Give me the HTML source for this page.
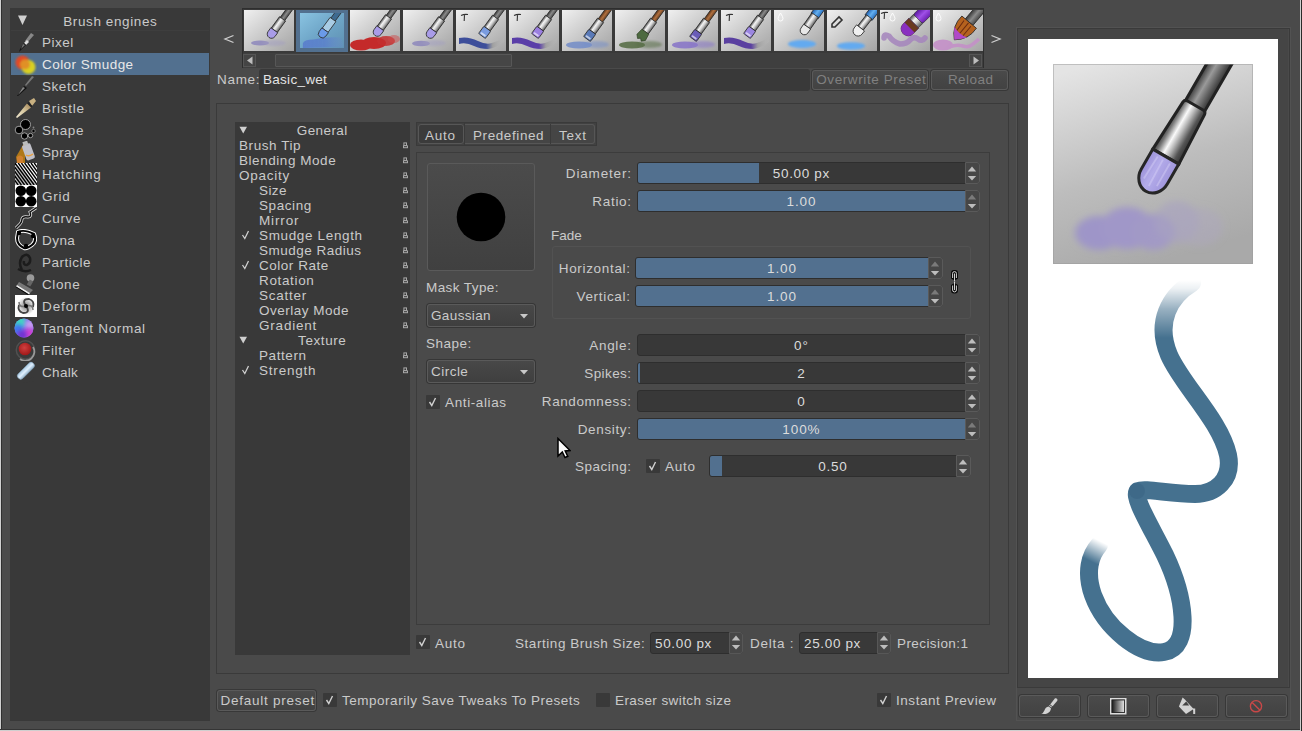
<!DOCTYPE html><html><head><meta charset="utf-8"><style>
html,body{margin:0;padding:0;}
body{width:1302px;height:731px;overflow:hidden;background:#4a4a4a;position:relative;font-family:'Liberation Sans', sans-serif;}
.t{position:absolute;white-space:nowrap;font-family:'Liberation Sans', sans-serif;font-size:13.5px;line-height:16px;color:#cacaca;}
svg{display:block;}
</style></head><body>
<div style="position:absolute;left:0px;top:0px;width:1px;height:731px;background:#cfcfcf"></div>
<div style="position:absolute;left:1px;top:0px;width:1px;height:731px;background:#2f2f2f"></div>
<div style="position:absolute;left:0px;top:730px;width:1302px;height:1px;background:#cfcfcf"></div>
<div style="position:absolute;left:0px;top:729px;width:1302px;height:1px;background:#353535"></div>
<div style="position:absolute;left:1300px;top:0px;width:1px;height:731px;background:#cfcfcf"></div>
<div style="position:absolute;left:1301px;top:0px;width:1px;height:731px;background:#2a2a2a"></div>
<div style="position:absolute;left:10px;top:8px;width:200px;height:713px;background:#393939"></div>
<div style="position:absolute;left:11px;top:30px;width:198px;height:1px;background:#3e3e3e"></div>
<svg style="position:absolute;left:17px;top:15px;" width="11" height="11" viewBox="0 0 11 11"><path d="M1 0.5 L10 0.5 L5.5 10 Z" fill="#cfcfcf"/></svg>
<div class="t" style="left:35.304px;top:14px;width:150px;text-align:center;color:#cacaca;font-size:13.5px;letter-spacing:0.608px;">Brush engines</div>
<div style="position:absolute;left:11px;top:53px;width:198px;height:22px;background:#52708f"></div>
<div class="t" style="left:42px;top:35px;color:#cacaca;font-size:13.5px;letter-spacing:0.475px;">Pixel</div>
<div class="t" style="left:42px;top:57px;color:#e8e8e8;font-size:13.5px;letter-spacing:0.436px;">Color Smudge</div>
<div class="t" style="left:42px;top:79px;color:#cacaca;font-size:13.5px;letter-spacing:0.56px;">Sketch</div>
<div class="t" style="left:42px;top:101px;color:#cacaca;font-size:13.5px;letter-spacing:0.733px;">Bristle</div>
<div class="t" style="left:42px;top:123px;color:#cacaca;font-size:13.5px;letter-spacing:0.6px;">Shape</div>
<div class="t" style="left:42px;top:145px;color:#cacaca;font-size:13.5px;letter-spacing:0.34px;">Spray</div>
<div class="t" style="left:42px;top:167px;color:#cacaca;font-size:13.5px;letter-spacing:0.796px;">Hatching</div>
<div class="t" style="left:42px;top:189px;color:#cacaca;font-size:13.5px;letter-spacing:0.757px;">Grid</div>
<div class="t" style="left:42px;top:211px;color:#cacaca;font-size:13.5px;letter-spacing:0.595px;">Curve</div>
<div class="t" style="left:42px;top:233px;color:#cacaca;font-size:13.5px;letter-spacing:0.44px;">Dyna</div>
<div class="t" style="left:42px;top:255px;color:#cacaca;font-size:13.5px;letter-spacing:0.496px;">Particle</div>
<div class="t" style="left:42px;top:277px;color:#cacaca;font-size:13.5px;letter-spacing:0.592px;">Clone</div>
<div class="t" style="left:42px;top:299px;color:#cacaca;font-size:13.5px;letter-spacing:0.894px;">Deform</div>
<div class="t" style="left:41px;top:321px;color:#cacaca;font-size:13.5px;letter-spacing:0.677px;">Tangent Normal</div>
<div class="t" style="left:42px;top:343px;color:#cacaca;font-size:13.5px;letter-spacing:0.664px;">Filter</div>
<div class="t" style="left:42px;top:365px;color:#cacaca;font-size:13.5px;letter-spacing:0.34px;">Chalk</div>
<svg width="0" height="0" style="position:absolute"><defs>
<radialGradient id="csm" cx="0.35" cy="0.35" r="0.8"><stop offset="0" stop-color="#e07a20"/><stop offset="0.6" stop-color="#d85a20"/><stop offset="1" stop-color="#cc3322"/></radialGradient>
<radialGradient id="csm2" cx="0.5" cy="0.5" r="0.6"><stop offset="0" stop-color="#d8d020"/><stop offset="1" stop-color="#c8c010"/></radialGradient>
<linearGradient id="bri" x1="0" y1="1" x2="1" y2="0"><stop offset="0" stop-color="#f0e8d0"/><stop offset="0.5" stop-color="#d8c8a0"/><stop offset="1" stop-color="#a08050"/></linearGradient>
<radialGradient id="tan" cx="0.4" cy="0.4" r="0.7"><stop offset="0" stop-color="#a0a0f0"/><stop offset="0.5" stop-color="#8060e0"/><stop offset="1" stop-color="#c040c0"/></radialGradient>
<linearGradient id="tan2" x1="0" y1="0" x2="1" y2="1"><stop offset="0" stop-color="#40e0b0" stop-opacity="0.9"/><stop offset="0.35" stop-color="#4080f0" stop-opacity="0.6"/><stop offset="0.7" stop-color="#8050e0" stop-opacity="0"/><stop offset="1" stop-color="#e040c0" stop-opacity="0.8"/></linearGradient>
<radialGradient id="fil" cx="0.45" cy="0.4" r="0.6"><stop offset="0" stop-color="#d04040"/><stop offset="1" stop-color="#a01818"/></radialGradient>
<linearGradient id="chk" x1="0" y1="0" x2="1" y2="0"><stop offset="0" stop-color="#a8c8e0"/><stop offset="0.5" stop-color="#e0f0ff"/><stop offset="1" stop-color="#90b0c8"/></linearGradient>
<radialGradient id="dfm" cx="0.5" cy="0.5" r="0.5"><stop offset="0" stop-color="#000"/><stop offset="0.4" stop-color="#666"/><stop offset="1" stop-color="#fff"/></radialGradient>
<filter id="gblur"><feGaussianBlur stdDeviation="0.4"/></filter><filter id="tb" x="-50%" y="-50%" width="200%" height="200%"><feGaussianBlur stdDeviation="2"/></filter><filter id="tb2" x="-20%" y="-20%" width="140%" height="140%"><feGaussianBlur stdDeviation="0.8"/></filter></defs></svg><svg style="position:absolute;left:14px;top:31px" width="23" height="22" viewBox="0 0 23 22"><path d="M17 2 L20 4 L13 12 L11 10 Z" fill="#888"/><path d="M13 9 L15 11 L12 14 L10 12Z" fill="#ddd"/><path d="M10 12 L12 14 L7 19 L5 21 L6 18 Z" fill="#151515"/><path d="M9 13 L11 14 L7 18Z" fill="#777"/></svg><svg style="position:absolute;left:14px;top:54px" width="23" height="22" viewBox="0 0 23 22"><g filter="url(#tb2)"><circle cx="8.5" cy="8.5" r="7" fill="#e04a28"/><circle cx="14.5" cy="13" r="7" fill="#d8d020"/><circle cx="11" cy="10.5" r="5" fill="#e09028"/></g></svg><svg style="position:absolute;left:14px;top:75px" width="23" height="22" viewBox="0 0 23 22"><path d="M19 0 L22 2 L13 13 L10 11 Z" fill="#3a3a3a"/><path d="M18 1 L20 2 L12 11 L11 10 Z" fill="#777"/><path d="M10 11 L13 13 L4 21 L3 21 Z" fill="#111"/><path d="M9 12 L11 13 L4 20 Z" fill="#888"/></svg><svg style="position:absolute;left:14px;top:97px" width="23" height="22" viewBox="0 0 23 22"><path d="M15 4 L20 1 L22 4 L18 9 Z" fill="#c8b080"/><path d="M14.5 5 L18.5 9 L17 10.5 L13 6.5 Z" fill="#222"/><path d="M13 6.5 L17 10.5 L3 21 L2 20 Z" fill="url(#bri)"/></svg><svg style="position:absolute;left:14px;top:119px" width="23" height="22" viewBox="0 0 23 22"><circle cx="11.5" cy="5.5" r="5" fill="#000" stroke="#bbb" stroke-width="0.8"/><circle cx="5" cy="11" r="3.8" fill="#000" stroke="#bbb" stroke-width="0.8"/><circle cx="10.5" cy="17" r="3.2" fill="#000" stroke="#bbb" stroke-width="0.8"/><circle cx="16.5" cy="16.5" r="2.2" fill="#000" stroke="#bbb" stroke-width="0.8"/><circle cx="19.5" cy="12" r="1.7" fill="#000" stroke="#aaa" stroke-width="0.6"/><circle cx="19.5" cy="8.5" r="0.9" fill="#888"/></svg><svg style="position:absolute;left:14px;top:141px" width="23" height="22" viewBox="0 0 23 22"><path d="M10 2 L2 16 L3 22 L11 22 L11 8 Z" fill="#b07818"/><path d="M3 16 Q6 13 9 16 L9 22 L3 22 Z" fill="#d08030"/><rect x="10" y="3" width="9" height="16" rx="2" transform="rotate(-20 14 11)" fill="#c0c0c8"/><rect x="12" y="0" width="5" height="4" transform="rotate(-20 14 11)" fill="#bbb"/><path d="M12 14 Q15 16 19 13" stroke="#e8a040" stroke-width="1.5" fill="none"/></svg><svg style="position:absolute;left:14px;top:163px" width="23" height="22" viewBox="0 0 23 22"><clipPath id="hc"><rect x="1" y="0" width="22" height="22"/></clipPath><g clip-path="url(#hc)"><rect x="1" y="0" width="22" height="22" fill="#fff"/><path d="M-11.8 0 L4.199999999999999 22" stroke="#000" stroke-width="1.4"/><path d="M-8.600000000000001 0 L7.399999999999999 22" stroke="#000" stroke-width="1.4"/><path d="M-5.4 0 L10.6 22" stroke="#000" stroke-width="1.4"/><path d="M-2.2 0 L13.8 22" stroke="#000" stroke-width="1.4"/><path d="M1.0 0 L17.0 22" stroke="#000" stroke-width="1.4"/><path d="M4.2 0 L20.2 22" stroke="#000" stroke-width="1.4"/><path d="M7.4 0 L23.4 22" stroke="#000" stroke-width="1.4"/><path d="M10.600000000000001 0 L26.6 22" stroke="#000" stroke-width="1.4"/><path d="M13.8 0 L29.8 22" stroke="#000" stroke-width="1.4"/><path d="M17.0 0 L33.0 22" stroke="#000" stroke-width="1.4"/><path d="M20.200000000000003 0 L36.2 22" stroke="#000" stroke-width="1.4"/><path d="M23.400000000000002 0 L39.400000000000006 22" stroke="#000" stroke-width="1.4"/><path d="M26.6 0 L42.6 22" stroke="#000" stroke-width="1.4"/><path d="M29.8 0 L45.8 22" stroke="#000" stroke-width="1.4"/><path d="M33.0 0 L49.0 22" stroke="#000" stroke-width="1.4"/><path d="M36.2 0 L52.2 22" stroke="#000" stroke-width="1.4"/><path d="M1 0 L23 22 L1 22 Z" fill="#000" opacity="0.25"/></g></svg><svg style="position:absolute;left:14px;top:185px" width="23" height="22" viewBox="0 0 23 22"><rect x="1" y="0" width="22" height="22" fill="#fff"/><g filter="url(#gblur)"><circle cx="6.8" cy="5.8" r="5.3" fill="#000"/><circle cx="17.2" cy="5.8" r="5.3" fill="#000"/><circle cx="6.8" cy="16.2" r="5.3" fill="#000"/><circle cx="17.2" cy="16.2" r="5.3" fill="#000"/></g></svg><svg style="position:absolute;left:14px;top:207px" width="23" height="22" viewBox="0 0 23 22"><path d="M22 1 L16 5 Q18 10 14 10 Q9 9 8 12 Q8 15 6 17 L2 21" fill="none" stroke="#ddd" stroke-width="3"/><path d="M22 1 L16 5 Q18 10 14 10 Q9 9 8 12 Q8 15 6 17 L2 21" fill="none" stroke="#111" stroke-width="1.4"/></svg><svg style="position:absolute;left:14px;top:229px" width="23" height="22" viewBox="0 0 23 22"><path d="M4 3 Q10 0 20 5 Q23 12 18 16 Q13 20 10 19 Q3 16 3 9 Z" fill="none" stroke="#fff" stroke-width="4"/><path d="M4 3 Q10 0 20 5 Q23 12 18 16 Q13 20 10 19 Q3 16 3 9 Z" fill="none" stroke="#000" stroke-width="2"/><circle cx="5" cy="4" r="2.2" fill="#000"/><circle cx="19" cy="7" r="2.2" fill="#000"/><circle cx="12" cy="17" r="2.2" fill="#000"/></svg><svg style="position:absolute;left:14px;top:251px" width="23" height="22" viewBox="0 0 23 22"><path d="M8 19 Q4 12 8 6 Q13 1 16 7 Q17 12 13 14 Q9 14 10 10" fill="none" stroke="#1c1c1c" stroke-width="2.5"/><path d="M4 18 Q11 22 17 19" fill="none" stroke="#1c1c1c" stroke-width="2.5"/></svg><svg style="position:absolute;left:14px;top:273px" width="23" height="22" viewBox="0 0 23 22"><circle cx="16.5" cy="5" r="3.8" fill="#9a9a9a"/><rect x="14" y="7" width="4" height="6" transform="rotate(30 16 10)" fill="#666"/><path d="M5 9 L19 17 L16 20 L3 12 Z" fill="#777"/><path d="M3 12 L16 20 L15 21.5 L2 13.5 Z" fill="#eee"/><path d="M2 13.5 L15 21.5 L14 22 L1.5 14 Z" fill="#000"/></svg><svg style="position:absolute;left:14px;top:295px" width="23" height="22" viewBox="0 0 23 22"><rect x="1" y="0" width="22" height="22" fill="#fff"/><circle cx="12" cy="11" r="9" fill="url(#dfm)" opacity="0.5"/><path d="M12 11 Q7 4 15 4 Q21 6 19 12" fill="none" stroke="#444" stroke-width="1.8"/><path d="M12 11 Q17 18 9 18 Q3 16 5 10" fill="none" stroke="#444" stroke-width="1.8"/><path d="M12 11 Q5 13 5 7" fill="none" stroke="#777" stroke-width="1.5"/><path d="M12 11 Q19 9 19 15" fill="none" stroke="#777" stroke-width="1.5"/><circle cx="12" cy="11" r="2" fill="#000"/></svg><svg style="position:absolute;left:13px;top:317px" width="23" height="22" viewBox="0 0 23 22"><clipPath id="tclip"><circle cx="11" cy="11" r="9.5"/></clipPath><g clip-path="url(#tclip)"><rect x="0" y="0" width="22" height="22" fill="#7a6af0"/><circle cx="6" cy="5" r="7" fill="#40d8c0" filter="url(#tb)"/><circle cx="5" cy="12" r="5" fill="#3c78f0" filter="url(#tb)"/><circle cx="17" cy="8" r="5" fill="#c8a0f0" filter="url(#tb)"/><circle cx="16" cy="17" r="6" fill="#d040d0" filter="url(#tb)"/><circle cx="9" cy="18" r="5" fill="#7030d0" filter="url(#tb)"/></g></svg><svg style="position:absolute;left:14px;top:339px" width="23" height="22" viewBox="0 0 23 22"><circle cx="11.5" cy="11" r="10" fill="#505050"/><circle cx="11.5" cy="11" r="8.5" fill="#3a3a3a"/><path d="M19 8 A9 9 0 0 1 6 20" stroke="#999" stroke-width="1.8" fill="none"/><circle cx="11" cy="10" r="6.3" fill="url(#fil)"/></svg><svg style="position:absolute;left:14px;top:361px" width="23" height="22" viewBox="0 0 23 22"><path d="M9 20 L20 16 L20 20 L9 22 Z" fill="#3a3a3a" opacity="0.8"/><rect x="7.5" y="-1" width="6.5" height="21" rx="3" transform="rotate(45 11 11)" fill="url(#chk)" stroke="#8aa8c0" stroke-width="0.6"/></svg>
<svg style="position:absolute;left:223px;top:34px;" width="12" height="10" viewBox="0 0 12 10"><polyline points="10.5,1.5 2,5 10.5,8.5" fill="none" stroke="#cfcfcf" stroke-width="1.3"/></svg>
<svg style="position:absolute;left:990px;top:34px;" width="12" height="10" viewBox="0 0 12 10"><polyline points="1.5,1.5 10,5 1.5,8.5" fill="none" stroke="#cfcfcf" stroke-width="1.3"/></svg>
<div style="position:absolute;left:242px;top:8px;width:742px;height:60px;background:#3a3a3a;box-sizing:border-box;border:1px solid #2e2e2e"></div>
<div style="position:absolute;left:243px;top:53px;width:740px;height:15px;background:#3f3f3f"></div>
<div style="position:absolute;left:243px;top:54px;width:13px;height:13px;box-sizing:border-box;border:1px solid #555;background:#444"></div>
<svg style="position:absolute;left:246px;top:56px;" width="8" height="9" viewBox="0 0 8 9"><path d="M6.5 0.5 L6.5 8.5 L1 4.5 Z" fill="#bdbdbd"/></svg>
<div style="position:absolute;left:969px;top:54px;width:13px;height:13px;box-sizing:border-box;border:1px solid #555;background:#444"></div>
<svg style="position:absolute;left:972px;top:56px;" width="8" height="9" viewBox="0 0 8 9"><path d="M1.5 0.5 L1.5 8.5 L7 4.5 Z" fill="#bdbdbd"/></svg>
<div style="position:absolute;left:275px;top:54px;width:237px;height:13px;box-sizing:border-box;border:1px solid #575757;background:#464646;border-radius:1px"></div>
<svg width="0" height="0" style="position:absolute"><defs>
<linearGradient id="tbg" x1="0" y1="0" x2="1" y2="1"><stop offset="0" stop-color="#f0f0f0"/><stop offset="0.5" stop-color="#c9c9c9"/><stop offset="1" stop-color="#a4a4a4"/></linearGradient>
<linearGradient id="tbgsel" x1="0" y1="0" x2="1" y2="1"><stop offset="0" stop-color="#8cc6e4"/><stop offset="0.5" stop-color="#6fa6c8"/><stop offset="1" stop-color="#5d8fb0"/></linearGradient>
<linearGradient id="fer" x1="0" y1="0" x2="1" y2="0"><stop offset="0" stop-color="#4a4a4a"/><stop offset="0.35" stop-color="#f4f4f4"/><stop offset="0.6" stop-color="#d0d0d0"/><stop offset="1" stop-color="#5a5a5a"/></linearGradient>
<linearGradient id="hgray" x1="0" y1="0" x2="1" y2="0"><stop offset="0" stop-color="#3a3a3a"/><stop offset="0.5" stop-color="#8a8a8a"/><stop offset="1" stop-color="#4a4a4a"/></linearGradient>
<linearGradient id="hbrown" x1="0" y1="0" x2="1" y2="0"><stop offset="0" stop-color="#5a3418"/><stop offset="0.5" stop-color="#b07040"/><stop offset="1" stop-color="#6a4020"/></linearGradient>
<linearGradient id="hblue" x1="0" y1="0" x2="1" y2="0"><stop offset="0" stop-color="#1f5fb0"/><stop offset="0.5" stop-color="#64b0f0"/><stop offset="1" stop-color="#2a70c0"/></linearGradient>
<linearGradient id="hpurp" x1="0" y1="0" x2="1" y2="0"><stop offset="0" stop-color="#5a18a0"/><stop offset="0.5" stop-color="#a050e8"/><stop offset="1" stop-color="#6a20b0"/></linearGradient>
<linearGradient id="sfade" x1="0" y1="0" x2="1" y2="0"><stop offset="0" stop-color="#000" stop-opacity="0"/></linearGradient>
<linearGradient id="selsm" x1="0" y1="0" x2="1" y2="0"><stop offset="0" stop-color="#5a7fcc" stop-opacity="0.95"/><stop offset="0.55" stop-color="#5a7fcc" stop-opacity="0.8"/><stop offset="1" stop-color="#6a90c8" stop-opacity="0.3"/></linearGradient>
<filter id="bl1" x="-50%" y="-50%" width="200%" height="200%"><feGaussianBlur stdDeviation="1.2"/></filter>
<filter id="bl2" x="-50%" y="-50%" width="200%" height="200%"><feGaussianBlur stdDeviation="2"/></filter>
<filter id="bl4" x="-50%" y="-50%" width="200%" height="200%"><feGaussianBlur stdDeviation="4"/></filter>
<filter id="bl05" x="-50%" y="-50%" width="200%" height="200%"><feGaussianBlur stdDeviation="0.5"/></filter>
</defs></svg><svg style="position:absolute;left:244px;top:10px" width="50" height="41" viewBox="0 0 50 41"><rect width="50" height="41" fill="url(#tbg)"/><ellipse cx="16" cy="33" rx="9" ry="2.6" fill="#8a84bc" opacity="0.8" filter="url(#bl05)"/><ellipse cx="30" cy="33" rx="12" ry="3" fill="#a09cc0" opacity="0.5" filter="url(#bl1)"/><g transform="translate(25,27.5) rotate(36)"><rect x="-2.75" y="-60" width="5.5" height="38" fill="url(#hgray)" stroke="#2a2a2a" stroke-width="0.8"/><rect x="-3.75" y="-23" width="7.5" height="14" fill="url(#fer)" stroke="#2a2a2a" stroke-width="0.8"/><path d="M-4.25 -9 L4.25 -9 L4.25 -4.25 A4.25 4.25 0 0 1 -4.25 -4.25 Z" fill="#a99ce8" stroke="#2a2a2a" stroke-width="0.8"/></g></svg><div style="position:absolute;left:296px;top:10px;width:52px;height:42px;background:#52708f"></div><svg style="position:absolute;left:300px;top:13px" width="44" height="35" viewBox="2 2 46 37" preserveAspectRatio="none"><rect width="50" height="41" fill="url(#tbgsel)"/><path d="M5 34 Q6 30 16 30 Q30 27 44 28 Q48 33 47 38 L5 39 Z" fill="url(#selsm)" filter="url(#bl05)"/><g transform="translate(23,27.5) rotate(36)"><rect x="-2.75" y="-60" width="5.5" height="38" fill="#3e6a90" stroke="#2a2a2a" stroke-width="0.8"/><rect x="-3.75" y="-23" width="7.5" height="14" fill="#a8cce4" stroke="#2a2a2a" stroke-width="0.8"/><path d="M-4.25 -9 L4.25 -9 L4.25 -4.25 A4.25 4.25 0 0 1 -4.25 -4.25 Z" fill="#6a9ae8" stroke="#2a2a2a" stroke-width="0.8"/></g></svg><svg style="position:absolute;left:350px;top:10px" width="50" height="41" viewBox="0 0 50 41"><rect width="50" height="41" fill="url(#tbg)"/><g filter="url(#bl05)"><ellipse cx="11" cy="35" rx="11" ry="5.5" fill="#c42a2a"/><ellipse cx="24" cy="33" rx="12" ry="6" fill="#c42a2a"/><ellipse cx="36" cy="31" rx="9" ry="5" fill="#c43030" opacity="0.85"/><ellipse cx="44" cy="29" rx="6" ry="4" fill="#d04a4a" opacity="0.5"/></g><g transform="translate(25,25.5) rotate(36)"><rect x="-2.75" y="-60" width="5.5" height="38" fill="url(#hgray)" stroke="#2a2a2a" stroke-width="0.8"/><rect x="-3.75" y="-23" width="7.5" height="14" fill="url(#fer)" stroke="#2a2a2a" stroke-width="0.8"/><path d="M-4.25 -9 L4.25 -9 L4.25 -4.25 A4.25 4.25 0 0 1 -4.25 -4.25 Z" fill="#a99ce8" stroke="#2a2a2a" stroke-width="0.8"/></g></svg><svg style="position:absolute;left:403px;top:10px" width="50" height="41" viewBox="0 0 50 41"><rect width="50" height="41" fill="url(#tbg)"/><ellipse cx="18" cy="33.5" rx="9" ry="2.8" fill="#8a84bc" opacity="0.8" filter="url(#bl05)"/><ellipse cx="31" cy="33" rx="12" ry="3" fill="#a09cc0" opacity="0.5" filter="url(#bl1)"/><g transform="translate(25,27.5) rotate(36)"><rect x="-2.75" y="-60" width="5.5" height="38" fill="url(#hgray)" stroke="#2a2a2a" stroke-width="0.8"/><rect x="-3.75" y="-23" width="7.5" height="14" fill="url(#fer)" stroke="#2a2a2a" stroke-width="0.8"/><path d="M-4.25 -9 L4.25 -9 L4.25 -4.25 A4.25 4.25 0 0 1 -4.25 -4.25 Z" fill="#a99ce8" stroke="#2a2a2a" stroke-width="0.8"/></g></svg><svg style="position:absolute;left:456px;top:10px" width="50" height="41" viewBox="0 0 50 41"><rect width="50" height="41" fill="url(#tbg)"/><path d="M5 5.5 Q8 4 12 4.5 M8.5 4.7 L8.2 11" fill="none" stroke="#333" stroke-width="1.1"/><defs><linearGradient id="sg4" x1="0" x2="1"><stop offset="0" stop-color="#3d4e9a"/><stop offset="0.6" stop-color="#3d4e9a"/><stop offset="0.75" stop-color="#a0a0a0"/><stop offset="1" stop-color="#b8b8b8" stop-opacity="0.3"/></linearGradient></defs><path d="M3 28 Q12 26 22 31 Q30 35 36 33 Q42 31 48 28 L48 32 Q40 38 32 39 Q24 39 18 36 Q10 32 3 34 Z" fill="url(#sg4)"/><g transform="translate(26,26) rotate(36)"><rect x="-2.75" y="-60" width="5.5" height="38" fill="url(#hgray)" stroke="#2a2a2a" stroke-width="0.8"/><rect x="-3.75" y="-23" width="7.5" height="14" fill="url(#fer)" stroke="#2a2a2a" stroke-width="0.8"/><rect x="-4.25" y="-9" width="8.5" height="9" rx="1" fill="#7a9ce0" stroke="#2a2a2a" stroke-width="0.8"/><rect x="-2.75" y="-3" width="5.5" height="2" fill="#fff" opacity="0.6"/></g></svg><svg style="position:absolute;left:509px;top:10px" width="50" height="41" viewBox="0 0 50 41"><rect width="50" height="41" fill="url(#tbg)"/><path d="M5 5.5 Q8 4 12 4.5 M8.5 4.7 L8.2 11" fill="none" stroke="#333" stroke-width="1.1"/><defs><linearGradient id="sg5" x1="0" x2="1"><stop offset="0" stop-color="#5a3ea8"/><stop offset="0.6" stop-color="#5a3ea8"/><stop offset="0.75" stop-color="#a0a0a0"/><stop offset="1" stop-color="#b8b8b8" stop-opacity="0.3"/></linearGradient></defs><path d="M3 28 Q12 26 22 31 Q30 35 36 33 Q42 31 48 28 L48 32 Q40 38 32 39 Q24 39 18 36 Q10 32 3 34 Z" fill="url(#sg5)"/><g transform="translate(26,26) rotate(36)"><rect x="-2.75" y="-60" width="5.5" height="38" fill="url(#hgray)" stroke="#2a2a2a" stroke-width="0.8"/><rect x="-3.75" y="-23" width="7.5" height="14" fill="url(#fer)" stroke="#2a2a2a" stroke-width="0.8"/><rect x="-4.25" y="-9" width="8.5" height="9" rx="1" fill="#9b7fe0" stroke="#2a2a2a" stroke-width="0.8"/><rect x="-2.75" y="-3" width="5.5" height="2" fill="#fff" opacity="0.6"/></g></svg><svg style="position:absolute;left:562px;top:10px" width="50" height="41" viewBox="0 0 50 41"><rect width="50" height="41" fill="url(#tbg)"/><ellipse cx="17" cy="35" rx="13" ry="3.4" fill="#7890c8" opacity="0.9" filter="url(#bl05)"/><ellipse cx="34" cy="34.5" rx="13" ry="3.6" fill="#7890c8" opacity="0.55" filter="url(#bl1)"/><g transform="translate(25,29) rotate(36)"><rect x="-2.75" y="-60" width="5.5" height="38" fill="url(#hbrown)" stroke="#2a2a2a" stroke-width="0.8"/><rect x="-3.75" y="-23" width="7.5" height="14" fill="url(#fer)" stroke="#2a2a2a" stroke-width="0.8"/><rect x="-4.25" y="-9" width="8.5" height="9" rx="1" fill="#5a7ab8" stroke="#2a2a2a" stroke-width="0.8"/><rect x="-2.75" y="-3" width="5.5" height="2" fill="#fff" opacity="0.6"/></g></svg><svg style="position:absolute;left:615px;top:10px" width="50" height="41" viewBox="0 0 50 41"><rect width="50" height="41" fill="url(#tbg)"/><ellipse cx="17" cy="35" rx="13" ry="3.4" fill="#5a7048" opacity="0.9" filter="url(#bl05)"/><ellipse cx="34" cy="34.5" rx="13" ry="3.6" fill="#5a7048" opacity="0.55" filter="url(#bl1)"/><g transform="translate(25,29) rotate(36)"><rect x="-2.75" y="-60" width="5.5" height="38" fill="url(#hbrown)" stroke="#2a2a2a" stroke-width="0.8"/><rect x="-3.75" y="-23" width="7.5" height="14" fill="url(#fer)" stroke="#2a2a2a" stroke-width="0.8"/><path d="M-4.25 -9 L4.25 -9 L5.25 -2 L2.25 1 L0 -1 L-2.25 1 L-5.25 -2 Z" fill="#4d6a40" stroke="#2a3a20" stroke-width="0.6"/></g></svg><svg style="position:absolute;left:668px;top:10px" width="50" height="41" viewBox="0 0 50 41"><rect width="50" height="41" fill="url(#tbg)"/><ellipse cx="17" cy="35" rx="13" ry="3.4" fill="#8a78c8" opacity="0.9" filter="url(#bl05)"/><ellipse cx="34" cy="34.5" rx="13" ry="3.6" fill="#8a78c8" opacity="0.55" filter="url(#bl1)"/><g transform="translate(25,29) rotate(36)"><rect x="-2.75" y="-60" width="5.5" height="38" fill="url(#hbrown)" stroke="#2a2a2a" stroke-width="0.8"/><rect x="-3.75" y="-23" width="7.5" height="14" fill="url(#fer)" stroke="#2a2a2a" stroke-width="0.8"/><rect x="-4.25" y="-9" width="8.5" height="9" rx="1" fill="#6a5cb8" stroke="#2a2a2a" stroke-width="0.8"/><rect x="-2.75" y="-3" width="5.5" height="2" fill="#fff" opacity="0.6"/></g></svg><svg style="position:absolute;left:721px;top:10px" width="50" height="41" viewBox="0 0 50 41"><rect width="50" height="41" fill="url(#tbg)"/><path d="M5 5.5 Q8 4 12 4.5 M8.5 4.7 L8.2 11" fill="none" stroke="#333" stroke-width="1.1"/><defs><linearGradient id="sg9" x1="0" x2="1"><stop offset="0" stop-color="#5a40a0"/><stop offset="0.6" stop-color="#5a40a0"/><stop offset="0.75" stop-color="#a0a0a0"/><stop offset="1" stop-color="#b8b8b8" stop-opacity="0.3"/></linearGradient></defs><path d="M3 28 Q12 26 22 31 Q30 35 36 33 Q42 31 48 28 L48 32 Q40 38 32 39 Q24 39 18 36 Q10 32 3 34 Z" fill="url(#sg9)"/><g transform="translate(26,26) rotate(36)"><rect x="-2.75" y="-60" width="5.5" height="38" fill="url(#hgray)" stroke="#2a2a2a" stroke-width="0.8"/><rect x="-3.75" y="-23" width="7.5" height="14" fill="url(#fer)" stroke="#2a2a2a" stroke-width="0.8"/><rect x="-4.25" y="-9" width="8.5" height="9" rx="1" fill="#9b86e0" stroke="#2a2a2a" stroke-width="0.8"/><rect x="-2.75" y="-3" width="5.5" height="2" fill="#fff" opacity="0.6"/></g></svg><svg style="position:absolute;left:774px;top:10px" width="50" height="41" viewBox="0 0 50 41"><rect width="50" height="41" fill="url(#tbg)"/><path d="M6.5 3 Q9 7 9 8.5 A2.5 2.5 0 0 1 4 8.5 Q4 7 6.5 3 Z" fill="none" stroke="#fff" stroke-width="0.9"/><ellipse cx="28" cy="34" rx="14" ry="4" fill="#64aaf0" filter="url(#bl1)"/><g transform="translate(28,24) rotate(35)"><rect x="-4.5" y="-60" width="9" height="38" fill="url(#hblue)" stroke="#2a2a2a" stroke-width="0.8"/><rect x="-4.0" y="-23" width="8" height="14" fill="url(#fer)" stroke="#2a2a2a" stroke-width="0.8"/><path d="M-4.25 -9 L4.25 -9 L4.25 -4.25 A4.25 4.25 0 0 1 -4.25 -4.25 Z" fill="#e8e8e8" stroke="#2a2a2a" stroke-width="0.8"/></g></svg><svg style="position:absolute;left:827px;top:10px" width="50" height="41" viewBox="0 0 50 41"><rect width="50" height="41" fill="url(#tbg)"/><path d="M5 14 L12 7 L15 10 L8 17 L5 17 Z" fill="none" stroke="#333" stroke-width="1.6"/><ellipse cx="24" cy="36" rx="14" ry="3.8" fill="#64aaf0" filter="url(#bl1)"/><g transform="translate(28,25) rotate(38)"><rect x="-4.5" y="-60" width="9" height="38" fill="url(#hblue)" stroke="#2a2a2a" stroke-width="0.8"/><rect x="-3.5" y="-23" width="7" height="14" fill="url(#fer)" stroke="#2a2a2a" stroke-width="0.8"/><path d="M-5.0 -9 L5.0 -9 L5.0 -5.0 A5.0 5.0 0 0 1 -5.0 -5.0 Z" fill="#f0f0f0" stroke="#2a2a2a" stroke-width="0.8"/></g></svg><svg style="position:absolute;left:880px;top:10px" width="50" height="41" viewBox="0 0 50 41"><rect width="50" height="41" fill="url(#tbg)"/><path d="M1 3.5 Q4 2 8 2.5 M4.5 2.7 L4.2 9" fill="none" stroke="#333" stroke-width="1.1"/><path d="M12.5 3 Q15 7 15 8.5 A2.5 2.5 0 0 1 10 8.5 Q10 7 12.5 3 Z" fill="none" stroke="#fff" stroke-width="0.9"/><path d="M4 28 Q4 23 9 26 Q13 32 20 34 Q27 34 30 30 Q34 26 38 29 Q42 32 45 28" fill="none" stroke="#a585bd" stroke-width="5.5" opacity="0.85" stroke-linecap="round" filter="url(#bl05)"/><g transform="translate(26,21) rotate(45)"><rect x="-6.5" y="-40" width="13" height="24" rx="3" fill="url(#hpurp)" stroke="#2a2a2a" stroke-width="0.6"/><rect x="-6.5" y="-17" width="13" height="6" fill="url(#fer)" stroke="#2a2a2a" stroke-width="0.6"/><path d="M-7 -11 L7 -11 L7 -3 Q7 3 0 4 Q-7 3 -7 -3 Z" fill="#6a3a20" stroke="#3a1a50" stroke-width="0.6"/><path d="M-7 -5 L7 -5 L7 -3 Q7 3 0 4 Q-7 3 -7 -3 Z" fill="#8a30c0"/></g></svg><svg style="position:absolute;left:933px;top:10px" width="50" height="41" viewBox="0 0 50 41"><rect width="50" height="41" fill="url(#tbg)"/><path d="M5.5 3 Q8 7 8 8.5 A2.5 2.5 0 0 1 3 8.5 Q3 7 5.5 3 Z" fill="none" stroke="#fff" stroke-width="0.9"/><g filter="url(#bl05)" opacity="0.9"><ellipse cx="10" cy="35" rx="10" ry="5.5" fill="#c490c8"/><path d="M16 37 Q24 34 30 36 Q36 38 40 34 Q44 31 46 29" fill="none" stroke="#c490c8" stroke-width="3.5"/></g><g transform="translate(22,29) rotate(40)"><rect x="-5" y="-42" width="10" height="20" fill="url(#hgray)" stroke="#2a2a2a" stroke-width="0.8"/><path d="M-9.5 -22 Q-11 -8 0 1 Q11 -8 9.5 -22 Z" fill="#b5621e" stroke="#2a2a2a" stroke-width="0.8"/><path d="M-5 -20 L-4 -6 M0 -21 L0 -3 M4 -20 L4 -6" stroke="#6a2a10" stroke-width="1"/><path d="M-8.5 -9 Q-4 -3 0 1 Q4 -3 8.5 -9 Q0 -6 -8.5 -9 Z" fill="#b048c8"/></g></svg>
<div class="t" style="left:217px;top:72px;color:#cacaca;font-size:13.5px;letter-spacing:0.7px;">Name:</div>
<div style="position:absolute;left:259px;top:69px;width:551px;height:22px;background:#393939;border-radius:3px"></div>
<div class="t" style="left:263px;top:72px;color:#e4e4e4;font-size:13.5px;letter-spacing:0.287px;">Basic_wet</div>
<div style="position:absolute;left:812px;top:70px;width:116px;height:20px;box-sizing:border-box;border:1px solid #5a5a5a;border-radius:3px;background:linear-gradient(#4a4a4a,#424242);box-shadow:0 0 0 1px #383838"></div>
<div class="t" style="left:813.303px;top:72px;width:116px;text-align:center;color:#808080;font-size:13.5px;letter-spacing:0.606px;">Overwrite Preset</div>
<div style="position:absolute;left:931px;top:70px;width:77px;height:20px;box-sizing:border-box;border:1px solid #5a5a5a;border-radius:3px;background:linear-gradient(#4a4a4a,#424242);box-shadow:0 0 0 1px #383838"></div>
<div class="t" style="left:932.243px;top:72px;width:77px;text-align:center;color:#808080;font-size:13.5px;letter-spacing:0.486px;">Reload</div>
<div style="position:absolute;left:216px;top:103px;width:793px;height:571px;box-sizing:border-box;border:1px solid #3a3a3a"></div>
<div style="position:absolute;left:235px;top:122px;width:175px;height:533px;background:#393939"></div>
<svg style="position:absolute;left:239px;top:126px;" width="9" height="9" viewBox="0 0 9 9"><path d="M0.5 0.8 L8 0.8 L4.2 7.5 Z" fill="#cfcfcf"/></svg>
<div class="t" style="left:262.2085px;top:123px;width:120px;text-align:center;color:#cacaca;font-size:13.5px;letter-spacing:0.417px;">General</div>
<div class="t" style="left:239px;top:138px;color:#cacaca;font-size:13.5px;letter-spacing:0.575px;">Brush Tip</div>
<svg style="position:absolute;left:402px;top:142px;" width="7" height="7" viewBox="0 0 7 7"><rect x="1.9" y="0.9" width="2.6" height="2.6" fill="none" stroke="#a8a8a8" stroke-width="1"/><rect x="1" y="3.4" width="5" height="2.8" fill="#a8a8a8"/><rect x="2" y="4.2" width="3" height="1" fill="#3a3a3a"/></svg>
<div class="t" style="left:239px;top:153px;color:#cacaca;font-size:13.5px;letter-spacing:0.55px;">Blending Mode</div>
<svg style="position:absolute;left:402px;top:157px;" width="7" height="7" viewBox="0 0 7 7"><rect x="1.9" y="0.9" width="2.6" height="2.6" fill="none" stroke="#a8a8a8" stroke-width="1"/><rect x="1" y="3.4" width="5" height="2.8" fill="#a8a8a8"/><rect x="2" y="4.2" width="3" height="1" fill="#3a3a3a"/></svg>
<div class="t" style="left:239px;top:168px;color:#cacaca;font-size:13.5px;letter-spacing:0.75px;">Opacity</div>
<svg style="position:absolute;left:402px;top:172px;" width="7" height="7" viewBox="0 0 7 7"><rect x="1.9" y="0.9" width="2.6" height="2.6" fill="none" stroke="#a8a8a8" stroke-width="1"/><rect x="1" y="3.4" width="5" height="2.8" fill="#a8a8a8"/><rect x="2" y="4.2" width="3" height="1" fill="#3a3a3a"/></svg>
<div class="t" style="left:259px;top:183px;color:#cacaca;font-size:13.5px;letter-spacing:0.42px;">Size</div>
<svg style="position:absolute;left:402px;top:187px;" width="7" height="7" viewBox="0 0 7 7"><rect x="1.9" y="0.9" width="2.6" height="2.6" fill="none" stroke="#a8a8a8" stroke-width="1"/><rect x="1" y="3.4" width="5" height="2.8" fill="#a8a8a8"/><rect x="2" y="4.2" width="3" height="1" fill="#3a3a3a"/></svg>
<div class="t" style="left:259px;top:198px;color:#cacaca;font-size:13.5px;letter-spacing:0.583px;">Spacing</div>
<svg style="position:absolute;left:402px;top:202px;" width="7" height="7" viewBox="0 0 7 7"><rect x="1.9" y="0.9" width="2.6" height="2.6" fill="none" stroke="#a8a8a8" stroke-width="1"/><rect x="1" y="3.4" width="5" height="2.8" fill="#a8a8a8"/><rect x="2" y="4.2" width="3" height="1" fill="#3a3a3a"/></svg>
<div class="t" style="left:259px;top:213px;color:#cacaca;font-size:13.5px;letter-spacing:0.876px;">Mirror</div>
<svg style="position:absolute;left:402px;top:217px;" width="7" height="7" viewBox="0 0 7 7"><rect x="1.9" y="0.9" width="2.6" height="2.6" fill="none" stroke="#a8a8a8" stroke-width="1"/><rect x="1" y="3.4" width="5" height="2.8" fill="#a8a8a8"/><rect x="2" y="4.2" width="3" height="1" fill="#3a3a3a"/></svg>
<div class="t" style="left:259px;top:228px;color:#cacaca;font-size:13.5px;letter-spacing:0.65px;">Smudge Length</div>
<svg style="position:absolute;left:241px;top:230px;" width="9" height="10" viewBox="0 0 9 10"><path d="M1.5 5 L3.8 8.5 L7.5 1" fill="none" stroke="#cfcfcf" stroke-width="1.3"/></svg>
<svg style="position:absolute;left:402px;top:232px;" width="7" height="7" viewBox="0 0 7 7"><rect x="1.9" y="0.9" width="2.6" height="2.6" fill="none" stroke="#a8a8a8" stroke-width="1"/><rect x="1" y="3.4" width="5" height="2.8" fill="#a8a8a8"/><rect x="2" y="4.2" width="3" height="1" fill="#3a3a3a"/></svg>
<div class="t" style="left:259px;top:243px;color:#cacaca;font-size:13.5px;letter-spacing:0.5px;">Smudge Radius</div>
<svg style="position:absolute;left:402px;top:247px;" width="7" height="7" viewBox="0 0 7 7"><rect x="1.9" y="0.9" width="2.6" height="2.6" fill="none" stroke="#a8a8a8" stroke-width="1"/><rect x="1" y="3.4" width="5" height="2.8" fill="#a8a8a8"/><rect x="2" y="4.2" width="3" height="1" fill="#3a3a3a"/></svg>
<div class="t" style="left:259px;top:258px;color:#cacaca;font-size:13.5px;letter-spacing:0.52px;">Color Rate</div>
<svg style="position:absolute;left:241px;top:260px;" width="9" height="10" viewBox="0 0 9 10"><path d="M1.5 5 L3.8 8.5 L7.5 1" fill="none" stroke="#cfcfcf" stroke-width="1.3"/></svg>
<svg style="position:absolute;left:402px;top:262px;" width="7" height="7" viewBox="0 0 7 7"><rect x="1.9" y="0.9" width="2.6" height="2.6" fill="none" stroke="#a8a8a8" stroke-width="1"/><rect x="1" y="3.4" width="5" height="2.8" fill="#a8a8a8"/><rect x="2" y="4.2" width="3" height="1" fill="#3a3a3a"/></svg>
<div class="t" style="left:259px;top:273px;color:#cacaca;font-size:13.5px;letter-spacing:0.647px;">Rotation</div>
<svg style="position:absolute;left:402px;top:277px;" width="7" height="7" viewBox="0 0 7 7"><rect x="1.9" y="0.9" width="2.6" height="2.6" fill="none" stroke="#a8a8a8" stroke-width="1"/><rect x="1" y="3.4" width="5" height="2.8" fill="#a8a8a8"/><rect x="2" y="4.2" width="3" height="1" fill="#3a3a3a"/></svg>
<div class="t" style="left:259px;top:288px;color:#cacaca;font-size:13.5px;letter-spacing:0.743px;">Scatter</div>
<svg style="position:absolute;left:402px;top:292px;" width="7" height="7" viewBox="0 0 7 7"><rect x="1.9" y="0.9" width="2.6" height="2.6" fill="none" stroke="#a8a8a8" stroke-width="1"/><rect x="1" y="3.4" width="5" height="2.8" fill="#a8a8a8"/><rect x="2" y="4.2" width="3" height="1" fill="#3a3a3a"/></svg>
<div class="t" style="left:259px;top:303px;color:#cacaca;font-size:13.5px;letter-spacing:0.491px;">Overlay Mode</div>
<svg style="position:absolute;left:402px;top:307px;" width="7" height="7" viewBox="0 0 7 7"><rect x="1.9" y="0.9" width="2.6" height="2.6" fill="none" stroke="#a8a8a8" stroke-width="1"/><rect x="1" y="3.4" width="5" height="2.8" fill="#a8a8a8"/><rect x="2" y="4.2" width="3" height="1" fill="#3a3a3a"/></svg>
<div class="t" style="left:259px;top:318px;color:#cacaca;font-size:13.5px;letter-spacing:0.796px;">Gradient</div>
<svg style="position:absolute;left:402px;top:322px;" width="7" height="7" viewBox="0 0 7 7"><rect x="1.9" y="0.9" width="2.6" height="2.6" fill="none" stroke="#a8a8a8" stroke-width="1"/><rect x="1" y="3.4" width="5" height="2.8" fill="#a8a8a8"/><rect x="2" y="4.2" width="3" height="1" fill="#3a3a3a"/></svg>
<svg style="position:absolute;left:239px;top:336px;" width="9" height="9" viewBox="0 0 9 9"><path d="M0.5 0.8 L8 0.8 L4.2 7.5 Z" fill="#cfcfcf"/></svg>
<div class="t" style="left:262.289px;top:333px;width:120px;text-align:center;color:#cacaca;font-size:13.5px;letter-spacing:0.578px;">Texture</div>
<div class="t" style="left:259px;top:348px;color:#cacaca;font-size:13.5px;letter-spacing:0.575px;">Pattern</div>
<svg style="position:absolute;left:402px;top:352px;" width="7" height="7" viewBox="0 0 7 7"><rect x="1.9" y="0.9" width="2.6" height="2.6" fill="none" stroke="#a8a8a8" stroke-width="1"/><rect x="1" y="3.4" width="5" height="2.8" fill="#a8a8a8"/><rect x="2" y="4.2" width="3" height="1" fill="#3a3a3a"/></svg>
<div class="t" style="left:259px;top:363px;color:#cacaca;font-size:13.5px;letter-spacing:0.793px;">Strength</div>
<svg style="position:absolute;left:241px;top:365px;" width="9" height="10" viewBox="0 0 9 10"><path d="M1.5 5 L3.8 8.5 L7.5 1" fill="none" stroke="#cfcfcf" stroke-width="1.3"/></svg>
<svg style="position:absolute;left:402px;top:367px;" width="7" height="7" viewBox="0 0 7 7"><rect x="1.9" y="0.9" width="2.6" height="2.6" fill="none" stroke="#a8a8a8" stroke-width="1"/><rect x="1" y="3.4" width="5" height="2.8" fill="#a8a8a8"/><rect x="2" y="4.2" width="3" height="1" fill="#3a3a3a"/></svg>
<div style="position:absolute;left:416px;top:122px;width:181px;height:24px;box-sizing:border-box;border:1px solid #3a3a3a;background:#414141"></div>
<div style="position:absolute;left:465px;top:124px;width:130px;height:20px;box-sizing:border-box;border:1px solid #565656;border-left:none;border-radius:0 3px 3px 0;background:#454545"></div>
<div style="position:absolute;left:418px;top:124px;width:46px;height:20px;box-sizing:border-box;border:1px solid #575757;border-radius:3px;background:#3b3b3b"></div>
<div style="position:absolute;left:464px;top:123px;width:1px;height:22px;background:#3a3a3a"></div>
<div style="position:absolute;left:550px;top:124px;width:1px;height:20px;background:#3a3a3a"></div>
<div class="t" style="left:425px;top:128px;color:#cacaca;font-size:13.5px;letter-spacing:0.767px;">Auto</div>
<div class="t" style="left:473px;top:128px;color:#cacaca;font-size:13.5px;letter-spacing:0.589px;">Predefined</div>
<div class="t" style="left:559px;top:128px;color:#cacaca;font-size:13.5px;letter-spacing:0.757px;">Text</div>
<div style="position:absolute;left:416px;top:152px;width:574px;height:473px;box-sizing:border-box;border:1px solid #3c3c3c"></div>
<div style="position:absolute;left:427px;top:163px;width:108px;height:108px;box-sizing:border-box;border:1px solid #5a5a5a;border-radius:3px;background:linear-gradient(#4b4b4b,#404040)"></div>
<svg style="position:absolute;left:456px;top:192px;" width="50" height="50" viewBox="0 0 50 50"><circle cx="25" cy="25" r="24.3" fill="#000"/></svg>
<div class="t" style="left:426px;top:280px;color:#cacaca;font-size:13.5px;letter-spacing:0.411px;">Mask Type:</div>
<div style="position:absolute;left:427px;top:304px;width:108px;height:23px;box-sizing:border-box;border:1px solid #5a5a5a;border-radius:3px;background:linear-gradient(#484848,#3f3f3f);box-shadow:0 0 0 1px #363636"></div>
<div class="t" style="left:431px;top:308px;color:#cacaca;font-size:13.5px;letter-spacing:0.37px;">Gaussian</div>
<svg style="position:absolute;left:520px;top:314px;" width="9" height="5" viewBox="0 0 9 5"><path d="M0 0 L8 0 L4 4.5 Z" fill="#c8c8c8"/></svg>
<div class="t" style="left:426px;top:336px;color:#cacaca;font-size:13.5px;letter-spacing:0.486px;">Shape:</div>
<div style="position:absolute;left:427px;top:360px;width:108px;height:23px;box-sizing:border-box;border:1px solid #5a5a5a;border-radius:3px;background:linear-gradient(#484848,#3f3f3f);box-shadow:0 0 0 1px #363636"></div>
<div class="t" style="left:431px;top:364px;color:#cacaca;font-size:13.5px;letter-spacing:0.472px;">Circle</div>
<svg style="position:absolute;left:520px;top:370px;" width="9" height="5" viewBox="0 0 9 5"><path d="M0 0 L8 0 L4 4.5 Z" fill="#c8c8c8"/></svg>
<div style="position:absolute;left:426px;top:395px;width:14px;height:14px;background:#393939;border-radius:1px"></div>
<svg style="position:absolute;left:428px;top:397px;" width="9" height="10" viewBox="0 0 9 10"><path d="M1.5 5 L3.8 8.5 L7.5 1" fill="none" stroke="#d0d0d0" stroke-width="1.4"/></svg>
<div class="t" style="left:445px;top:395px;color:#cacaca;font-size:13.5px;letter-spacing:0.622px;">Anti-alias</div>
<div class="t" style="left:431.829px;top:166px;width:200px;text-align:right;color:#cacaca;font-size:13.5px;letter-spacing:0.829px;">Diameter:</div>
<div style="position:absolute;left:637px;top:162px;width:343px;height:22px;box-sizing:border-box;border:1px solid #2e2e2e;border-radius:3px;background:#383838"></div>
<div style="position:absolute;left:638px;top:163px;width:121px;height:20px;background:#52708f;border-radius:2px 0 0 2px"></div>
<div style="position:absolute;left:965px;top:162px;width:15px;height:22px;box-sizing:border-box;border:1px solid #5a5a5a;border-radius:0 3px 3px 0;background:#464646"></div>
<svg style="position:absolute;left:967px;top:166px;" width="10" height="16" viewBox="0 0 10 16"><path d="M0.8 5.5 L9.2 5.5 L5 0.5 Z" fill="#bdbdbd"/><path d="M0.8 10.0 L9.2 10.0 L5 14.5 Z" fill="#bdbdbd"/></svg>
<div class="t" style="left:637.3255px;top:166px;width:328px;text-align:center;color:#dcdcdc;font-size:13.5px;letter-spacing:0.651px;">50.00 px</div>
<div class="t" style="left:431.672px;top:194px;width:200px;text-align:right;color:#cacaca;font-size:13.5px;letter-spacing:0.672px;">Ratio:</div>
<div style="position:absolute;left:637px;top:190px;width:343px;height:22px;box-sizing:border-box;border:1px solid #2e2e2e;border-radius:3px;background:#383838"></div>
<div style="position:absolute;left:638px;top:191px;width:327px;height:20px;background:#52708f;border-radius:2px 0 0 2px"></div>
<div style="position:absolute;left:965px;top:190px;width:15px;height:22px;box-sizing:border-box;border:1px solid #5a5a5a;border-radius:0 3px 3px 0;background:#464646"></div>
<svg style="position:absolute;left:967px;top:194px;" width="10" height="16" viewBox="0 0 10 16"><path d="M0.8 5.5 L9.2 5.5 L5 0.5 Z" fill="#7a7a7a"/><path d="M0.8 10.0 L9.2 10.0 L5 14.5 Z" fill="#bdbdbd"/></svg>
<div class="t" style="left:637.45px;top:194px;width:328px;text-align:center;color:#dcdcdc;font-size:13.5px;letter-spacing:0.9px;">1.00</div>
<div class="t" style="left:551px;top:228px;color:#cacaca;font-size:13.5px;letter-spacing:0px;">Fade</div>
<div style="position:absolute;left:552px;top:246px;width:419px;height:73px;box-sizing:border-box;border:1px solid #525252;border-radius:3px"></div>
<div class="t" style="left:430.669px;top:261px;width:200px;text-align:right;color:#cacaca;font-size:13.5px;letter-spacing:0.669px;">Horizontal:</div>
<div style="position:absolute;left:635px;top:257px;width:308px;height:22px;box-sizing:border-box;border:1px solid #2e2e2e;border-radius:3px;background:#383838"></div>
<div style="position:absolute;left:636px;top:258px;width:292px;height:20px;background:#52708f;border-radius:2px 0 0 2px"></div>
<div style="position:absolute;left:928px;top:257px;width:15px;height:22px;box-sizing:border-box;border:1px solid #5a5a5a;border-radius:0 3px 3px 0;background:#464646"></div>
<svg style="position:absolute;left:930px;top:261px;" width="10" height="16" viewBox="0 0 10 16"><path d="M0.8 5.5 L9.2 5.5 L5 0.5 Z" fill="#7a7a7a"/><path d="M0.8 10.0 L9.2 10.0 L5 14.5 Z" fill="#bdbdbd"/></svg>
<div class="t" style="left:635.45px;top:261px;width:293px;text-align:center;color:#dcdcdc;font-size:13.5px;letter-spacing:0.9px;">1.00</div>
<div class="t" style="left:430.69px;top:289px;width:200px;text-align:right;color:#cacaca;font-size:13.5px;letter-spacing:0.69px;">Vertical:</div>
<div style="position:absolute;left:635px;top:285px;width:308px;height:22px;box-sizing:border-box;border:1px solid #2e2e2e;border-radius:3px;background:#383838"></div>
<div style="position:absolute;left:636px;top:286px;width:292px;height:20px;background:#52708f;border-radius:2px 0 0 2px"></div>
<div style="position:absolute;left:928px;top:285px;width:15px;height:22px;box-sizing:border-box;border:1px solid #5a5a5a;border-radius:0 3px 3px 0;background:#464646"></div>
<svg style="position:absolute;left:930px;top:289px;" width="10" height="16" viewBox="0 0 10 16"><path d="M0.8 5.5 L9.2 5.5 L5 0.5 Z" fill="#7a7a7a"/><path d="M0.8 10.0 L9.2 10.0 L5 14.5 Z" fill="#bdbdbd"/></svg>
<div class="t" style="left:635.45px;top:289px;width:293px;text-align:center;color:#dcdcdc;font-size:13.5px;letter-spacing:0.9px;">1.00</div>
<svg style="position:absolute;left:950px;top:269px;" width="10" height="26" viewBox="0 0 10 26"><path d="M1 9.5 V4 Q1 1 4 1 H5 Q8 1 8 4 V9.5 L4.5 11.5 Z" fill="#0a0a0a"/><path d="M2.6 9 V4.4 Q2.6 2.6 4.5 2.6 Q6.4 2.6 6.4 4.4 V9" fill="none" stroke="#e8e8e8" stroke-width="0.9"/><path d="M4.5 4.5 V12.5" stroke="#e8e8e8" stroke-width="0.9"/><g transform="translate(0,14)"><path d="M1 2 L4.5 0 L8 2 V7.5 Q8 10.5 5 10.5 H4 Q1 10.5 1 7.5 Z" fill="#0a0a0a"/><path d="M2.6 2.5 V7 Q2.6 8.9 4.5 8.9 Q6.4 8.9 6.4 7 V2.5" fill="none" stroke="#e8e8e8" stroke-width="0.9"/><path d="M4.5 -1 V7" stroke="#e8e8e8" stroke-width="0.9"/></g></svg>
<div class="t" style="left:431.68px;top:338px;width:200px;text-align:right;color:#cacaca;font-size:13.5px;letter-spacing:0.68px;">Angle:</div>
<div style="position:absolute;left:637px;top:334px;width:343px;height:22px;box-sizing:border-box;border:1px solid #2e2e2e;border-radius:3px;background:#383838"></div>
<div style="position:absolute;left:965px;top:334px;width:15px;height:22px;box-sizing:border-box;border:1px solid #5a5a5a;border-radius:0 3px 3px 0;background:#464646"></div>
<svg style="position:absolute;left:967px;top:338px;" width="10" height="16" viewBox="0 0 10 16"><path d="M0.8 5.5 L9.2 5.5 L5 0.5 Z" fill="#bdbdbd"/><path d="M0.8 10.0 L9.2 10.0 L5 14.5 Z" fill="#bdbdbd"/></svg>
<div class="t" style="left:637.45px;top:338px;width:328px;text-align:center;color:#dcdcdc;font-size:13.5px;letter-spacing:0.9px;">0°</div>
<div class="t" style="left:431.407px;top:366px;width:200px;text-align:right;color:#cacaca;font-size:13.5px;letter-spacing:0.407px;">Spikes:</div>
<div style="position:absolute;left:637px;top:362px;width:343px;height:22px;box-sizing:border-box;border:1px solid #2e2e2e;border-radius:3px;background:#383838"></div>
<div style="position:absolute;left:638px;top:363px;width:2px;height:20px;background:#52708f;border-radius:2px 0 0 2px"></div>
<div style="position:absolute;left:965px;top:362px;width:15px;height:22px;box-sizing:border-box;border:1px solid #5a5a5a;border-radius:0 3px 3px 0;background:#464646"></div>
<svg style="position:absolute;left:967px;top:366px;" width="10" height="16" viewBox="0 0 10 16"><path d="M0.8 5.5 L9.2 5.5 L5 0.5 Z" fill="#bdbdbd"/><path d="M0.8 10.0 L9.2 10.0 L5 14.5 Z" fill="#bdbdbd"/></svg>
<div class="t" style="left:637.0px;top:366px;width:328px;text-align:center;color:#dcdcdc;font-size:13.5px;letter-spacing:0px;">2</div>
<div class="t" style="left:431.586px;top:394px;width:200px;text-align:right;color:#cacaca;font-size:13.5px;letter-spacing:0.586px;">Randomness:</div>
<div style="position:absolute;left:637px;top:390px;width:343px;height:22px;box-sizing:border-box;border:1px solid #2e2e2e;border-radius:3px;background:#383838"></div>
<div style="position:absolute;left:965px;top:390px;width:15px;height:22px;box-sizing:border-box;border:1px solid #5a5a5a;border-radius:0 3px 3px 0;background:#464646"></div>
<svg style="position:absolute;left:967px;top:394px;" width="10" height="16" viewBox="0 0 10 16"><path d="M0.8 5.5 L9.2 5.5 L5 0.5 Z" fill="#bdbdbd"/><path d="M0.8 10.0 L9.2 10.0 L5 14.5 Z" fill="#bdbdbd"/></svg>
<div class="t" style="left:637.0px;top:394px;width:328px;text-align:center;color:#dcdcdc;font-size:13.5px;letter-spacing:0px;">0</div>
<div class="t" style="left:431.644px;top:422px;width:200px;text-align:right;color:#cacaca;font-size:13.5px;letter-spacing:0.644px;">Density:</div>
<div style="position:absolute;left:637px;top:418px;width:343px;height:22px;box-sizing:border-box;border:1px solid #2e2e2e;border-radius:3px;background:#383838"></div>
<div style="position:absolute;left:638px;top:419px;width:327px;height:20px;background:#52708f;border-radius:2px 0 0 2px"></div>
<div style="position:absolute;left:965px;top:418px;width:15px;height:22px;box-sizing:border-box;border:1px solid #5a5a5a;border-radius:0 3px 3px 0;background:#464646"></div>
<svg style="position:absolute;left:967px;top:422px;" width="10" height="16" viewBox="0 0 10 16"><path d="M0.8 5.5 L9.2 5.5 L5 0.5 Z" fill="#7a7a7a"/><path d="M0.8 10.0 L9.2 10.0 L5 14.5 Z" fill="#bdbdbd"/></svg>
<div class="t" style="left:637.45px;top:422px;width:328px;text-align:center;color:#dcdcdc;font-size:13.5px;letter-spacing:0.9px;">100%</div>
<div class="t" style="left:431.506px;top:459px;width:200px;text-align:right;color:#cacaca;font-size:13.5px;letter-spacing:0.506px;">Spacing:</div>
<div style="position:absolute;left:646px;top:459px;width:14px;height:14px;background:#393939;border-radius:1px"></div>
<svg style="position:absolute;left:648px;top:461px;" width="9" height="10" viewBox="0 0 9 10"><path d="M1.5 5 L3.8 8.5 L7.5 1" fill="none" stroke="#d0d0d0" stroke-width="1.4"/></svg>
<div class="t" style="left:665px;top:459px;color:#cacaca;font-size:13.5px;letter-spacing:0.767px;">Auto</div>
<div style="position:absolute;left:709px;top:455px;width:262px;height:22px;box-sizing:border-box;border:1px solid #2e2e2e;border-radius:3px;background:#383838"></div>
<div style="position:absolute;left:710px;top:456px;width:12px;height:20px;background:#52708f;border-radius:2px 0 0 2px"></div>
<div style="position:absolute;left:956px;top:455px;width:15px;height:22px;box-sizing:border-box;border:1px solid #5a5a5a;border-radius:0 3px 3px 0;background:#464646"></div>
<svg style="position:absolute;left:958px;top:459px;" width="10" height="16" viewBox="0 0 10 16"><path d="M0.8 5.5 L9.2 5.5 L5 0.5 Z" fill="#bdbdbd"/><path d="M0.8 10.0 L9.2 10.0 L5 14.5 Z" fill="#bdbdbd"/></svg>
<div class="t" style="left:709.38px;top:459px;width:247px;text-align:center;color:#dcdcdc;font-size:13.5px;letter-spacing:0.76px;">0.50</div>
<div style="position:absolute;left:416px;top:635px;width:14px;height:14px;background:#393939;border-radius:1px"></div>
<svg style="position:absolute;left:418px;top:637px;" width="9" height="10" viewBox="0 0 9 10"><path d="M1.5 5 L3.8 8.5 L7.5 1" fill="none" stroke="#d0d0d0" stroke-width="1.4"/></svg>
<div class="t" style="left:435px;top:636px;color:#cacaca;font-size:13.5px;letter-spacing:0.767px;">Auto</div>
<div class="t" style="left:515px;top:636px;color:#cacaca;font-size:13.5px;letter-spacing:0.553px;">Starting Brush Size:</div>
<div style="position:absolute;left:650px;top:632px;width:93px;height:22px;box-sizing:border-box;border:1px solid #2e2e2e;border-radius:3px;background:#393939"></div>
<div style="position:absolute;left:729px;top:632px;width:14px;height:22px;box-sizing:border-box;border:1px solid #575757;border-radius:0 3px 3px 0;background:#474747"></div>
<svg style="position:absolute;left:731px;top:635px;" width="10" height="16" viewBox="0 0 10 16"><path d="M0.8 5.5 L9.2 5.5 L5 0.5 Z" fill="#bdbdbd"/><path d="M0.8 10.0 L9.2 10.0 L5 14.5 Z" fill="#bdbdbd"/></svg>
<div class="t" style="left:655px;top:636px;color:#dcdcdc;font-size:13.5px;letter-spacing:0.651px;">50.00 px</div>
<div class="t" style="left:750px;top:636px;color:#cacaca;font-size:13.5px;letter-spacing:0.735px;">Delta :</div>
<div style="position:absolute;left:799px;top:632px;width:92px;height:22px;box-sizing:border-box;border:1px solid #2e2e2e;border-radius:3px;background:#393939"></div>
<div style="position:absolute;left:877px;top:632px;width:14px;height:22px;box-sizing:border-box;border:1px solid #575757;border-radius:0 3px 3px 0;background:#474747"></div>
<svg style="position:absolute;left:879px;top:635px;" width="10" height="16" viewBox="0 0 10 16"><path d="M0.8 5.5 L9.2 5.5 L5 0.5 Z" fill="#bdbdbd"/><path d="M0.8 10.0 L9.2 10.0 L5 14.5 Z" fill="#bdbdbd"/></svg>
<div class="t" style="left:804px;top:636px;color:#dcdcdc;font-size:13.5px;letter-spacing:0.651px;">25.00 px</div>
<div class="t" style="left:897px;top:636px;color:#cacaca;font-size:13.5px;letter-spacing:0.42px;">Precision:1</div>
<div style="position:absolute;left:217px;top:690px;width:99px;height:21px;box-sizing:border-box;border:1px solid #5a5a5a;border-radius:3px;background:linear-gradient(#4a4a4a,#424242);box-shadow:0 0 0 1px #383838"></div>
<div class="t" style="left:218.373px;top:693px;width:99px;text-align:center;color:#cacaca;font-size:13.5px;letter-spacing:0.746px;">Default preset</div>
<div style="position:absolute;left:323px;top:693px;width:14px;height:14px;background:#393939;border-radius:1px"></div>
<svg style="position:absolute;left:325px;top:695px;" width="9" height="10" viewBox="0 0 9 10"><path d="M1.5 5 L3.8 8.5 L7.5 1" fill="none" stroke="#d0d0d0" stroke-width="1.4"/></svg>
<div class="t" style="left:342px;top:693px;color:#cacaca;font-size:13.5px;letter-spacing:0.515px;">Temporarily Save Tweaks To Presets</div>
<div style="position:absolute;left:596px;top:693px;width:14px;height:14px;background:#393939;border-radius:1px"></div>
<div class="t" style="left:615px;top:693px;color:#cacaca;font-size:13.5px;letter-spacing:0.418px;">Eraser switch size</div>
<div style="position:absolute;left:877px;top:693px;width:14px;height:14px;background:#393939;border-radius:1px"></div>
<svg style="position:absolute;left:879px;top:695px;" width="9" height="10" viewBox="0 0 9 10"><path d="M1.5 5 L3.8 8.5 L7.5 1" fill="none" stroke="#d0d0d0" stroke-width="1.4"/></svg>
<div class="t" style="left:896px;top:693px;color:#cacaca;font-size:13.5px;letter-spacing:0.55px;">Instant Preview</div>
<div style="position:absolute;left:1016px;top:27px;width:275px;height:694px;box-sizing:border-box;border:1px solid #525252"></div>
<div style="position:absolute;left:1017px;top:28px;width:273px;height:660px;box-sizing:border-box;border:1px solid #3a3a3a"></div>
<div style="position:absolute;left:1018px;top:29px;width:270px;height:658px;background:#454545"></div>
<div style="position:absolute;left:1028px;top:39px;width:250px;height:639px;background:#ffffff"></div>
<svg style="position:absolute;left:1053px;top:64px" width="200" height="200" viewBox="0 0 200 200"><defs>
<linearGradient id="pbg" x1="0.2" y1="0" x2="0.5" y2="1"><stop offset="0" stop-color="#e4e4e4"/><stop offset="0.55" stop-color="#bdbdbd"/><stop offset="1" stop-color="#a9a9a9"/></linearGradient>
<linearGradient id="pfer" x1="0" y1="0" x2="1" y2="0"><stop offset="0" stop-color="#3a3a3a"/><stop offset="0.15" stop-color="#777"/><stop offset="0.38" stop-color="#fafafa"/><stop offset="0.55" stop-color="#bbb"/><stop offset="0.8" stop-color="#555"/><stop offset="1" stop-color="#333"/></linearGradient>
<linearGradient id="phan" x1="0" y1="0" x2="1" y2="0"><stop offset="0" stop-color="#3a3a3a"/><stop offset="0.4" stop-color="#9a9a9a"/><stop offset="0.7" stop-color="#666"/><stop offset="1" stop-color="#333"/></linearGradient>
<linearGradient id="ptip" x1="0" y1="0" x2="1" y2="0"><stop offset="0" stop-color="#9c92d8"/><stop offset="0.4" stop-color="#b4acea"/><stop offset="1" stop-color="#a096dc"/></linearGradient>
<linearGradient id="psm" x1="0" y1="0" x2="1" y2="0"><stop offset="0" stop-color="#9d94c8"/><stop offset="0.5" stop-color="#a29ac6"/><stop offset="1" stop-color="#b0aab8" stop-opacity="0.3"/></linearGradient>
<filter id="pbl" x="-30%" y="-50%" width="160%" height="200%"><feGaussianBlur stdDeviation="3.5"/></filter>
</defs>
<rect x="0" y="0" width="200" height="200" fill="url(#pbg)"/>
<g filter="url(#pbl)">
<ellipse cx="46" cy="169" rx="24" ry="17" fill="#9e95c8"/>
<ellipse cx="74" cy="164" rx="26" ry="21" fill="#a097c8"/>
<ellipse cx="100" cy="168" rx="22" ry="18" fill="#a199c6" opacity="0.95"/>
<ellipse cx="124" cy="158" rx="22" ry="21" fill="#a8a1c2" opacity="0.6"/>
<ellipse cx="146" cy="163" rx="24" ry="19" fill="#aca6bf" opacity="0.45"/>
</g>
<g transform="translate(112.8,92.6) rotate(30)">
<rect x="-11" y="-240" width="22" height="183" fill="url(#phan)" stroke="#222" stroke-width="3"/>
<path d="M-15 0 L-12.5 -56 Q-12 -59 -9 -59 L9 -59 Q12 -59 12.5 -56 L15 0 Z" fill="url(#pfer)" stroke="#222" stroke-width="3"/>
<path d="M-15 0 L15 0 L15 23 A15 17 0 0 1 -15 23 Z" fill="url(#ptip)" stroke="#262626" stroke-width="3"/>
<path d="M-7 4 L-8 30 M-1 4 L0 34 M7 4 L7 30" stroke="#d8d2f8" stroke-width="1.8" opacity="0.45"/>
</g>
<rect x="0.5" y="0.5" width="199" height="199" fill="none" stroke="#9a9a9a" stroke-width="1" stroke-dasharray="1 1"/>
</svg><svg style="position:absolute;left:1028px;top:270px" width="250" height="407" viewBox="0 0 250 407"><defs>
<linearGradient id="fadeTop" gradientUnits="userSpaceOnUse" x1="0" y1="280" x2="0" y2="338"><stop offset="0" stop-color="#fff" stop-opacity="1"/><stop offset="0.15" stop-color="#fff" stop-opacity="0.9"/><stop offset="0.5" stop-color="#fff" stop-opacity="0.45"/><stop offset="1" stop-color="#fff" stop-opacity="0"/></linearGradient>
<linearGradient id="fadeBot" gradientUnits="userSpaceOnUse" x1="1102" y1="542" x2="1092" y2="562"><stop offset="0" stop-color="#fff" stop-opacity="1"/><stop offset="1" stop-color="#fff" stop-opacity="0"/></linearGradient>
<filter id="sbl"><feGaussianBlur stdDeviation="0.6"/></filter>
</defs>
<g transform="translate(-1028,-270)">
<path d="M1192 283 C1170 296 1155 322 1169 355 C1182 385 1220 420 1228 455 C1233 480 1215 494 1195 494 C1170 494 1145 488 1138 491 C1132 496 1150 525 1165 555 C1184 595 1193 647 1164 652 C1140 656 1105 628 1093 595 C1085 572 1090 555 1099 545" fill="none" stroke="#44718f" stroke-width="18" stroke-linecap="round" stroke-linejoin="round" filter="url(#sbl)"/>
<circle cx="1137" cy="491" r="8" fill="#3a6585" opacity="0.6" filter="url(#sbl)"/>
<rect x="1140" y="270" width="80" height="75" fill="url(#fadeTop)"/>
<rect x="1070" y="535" width="45" height="40" fill="url(#fadeBot)"/>
</g></svg>
<div style="position:absolute;left:1019px;top:695px;width:61px;height:22px;box-sizing:border-box;border:1px solid #5a5a5a;border-radius:3px;background:linear-gradient(#4a4a4a,#424242);box-shadow:0 0 0 1px #383838"></div>
<svg style="position:absolute;left:1040px;top:697px;" width="20" height="18" viewBox="0 0 20 18"><path d="M15 1.2 Q18 0.8 17.3 3.8 L12.6 9.2 L10.2 7.4 Z" fill="#d2d2d2"/><path d="M9.6 8 L12 9.8 L11.4 10.6 L9 8.8 Z" fill="#d2d2d2"/><path d="M8.6 9.4 L11 11.2 Q10.6 15 7.2 16.4 Q4 17.6 1.2 16.6 Q3.4 16 4.4 13.4 Q5.4 10 8.6 9.4 Z" fill="#d2d2d2"/></svg>
<div style="position:absolute;left:1088px;top:695px;width:61px;height:22px;box-sizing:border-box;border:1px solid #5a5a5a;border-radius:3px;background:linear-gradient(#4a4a4a,#424242);box-shadow:0 0 0 1px #383838"></div>
<svg style="position:absolute;left:1109px;top:697px;" width="20" height="18" viewBox="0 0 20 18"><defs><linearGradient id="gg" x1="0" x2="1"><stop offset="0" stop-color="#1a1a1a"/><stop offset="1" stop-color="#e8e8e8"/></linearGradient></defs><rect x="1.75" y="1.75" width="15" height="15" fill="none" stroke="#dcdcdc" stroke-width="1.5"/><rect x="3" y="3" width="12.5" height="12.5" fill="url(#gg)" stroke="#222" stroke-width="0.8"/></svg>
<div style="position:absolute;left:1157px;top:695px;width:61px;height:22px;box-sizing:border-box;border:1px solid #5a5a5a;border-radius:3px;background:linear-gradient(#4a4a4a,#424242);box-shadow:0 0 0 1px #383838"></div>
<svg style="position:absolute;left:1178px;top:697px;" width="20" height="18" viewBox="0 0 20 18"><path d="M4.6 0.6 L6.6 2.2 L15.6 12 L8 17 L0.9 9.6 Z" fill="#d2d2d2"/><path d="M4.2 8.6 L8.2 4.6 L11.2 8.6 Z" fill="#444"/><path d="M14.6 11.6 H17.2 V17 H15.2 V13.6 Z" fill="#d2d2d2"/></svg>
<div style="position:absolute;left:1226px;top:695px;width:61px;height:22px;box-sizing:border-box;border:1px solid #5a5a5a;border-radius:3px;background:linear-gradient(#4a4a4a,#424242);box-shadow:0 0 0 1px #383838"></div>
<svg style="position:absolute;left:1247px;top:697px;" width="20" height="18" viewBox="0 0 20 18"><circle cx="9" cy="9.2" r="5.6" fill="none" stroke="#c84848" stroke-width="1.4"/><path d="M5.2 5.4 L12.8 13" stroke="#c84848" stroke-width="1.4"/></svg>
<svg style="position:absolute;left:556px;top:437px;" width="15" height="22" viewBox="0 0 15 22"><path d="M2 1.5 L2 19 L6.3 15 L9 20.5 L11.8 19.3 L9.2 14 L14 13.5 Z" fill="#fafafa" stroke="#000" stroke-width="1.5" stroke-linejoin="miter"/></svg>
</body></html>
